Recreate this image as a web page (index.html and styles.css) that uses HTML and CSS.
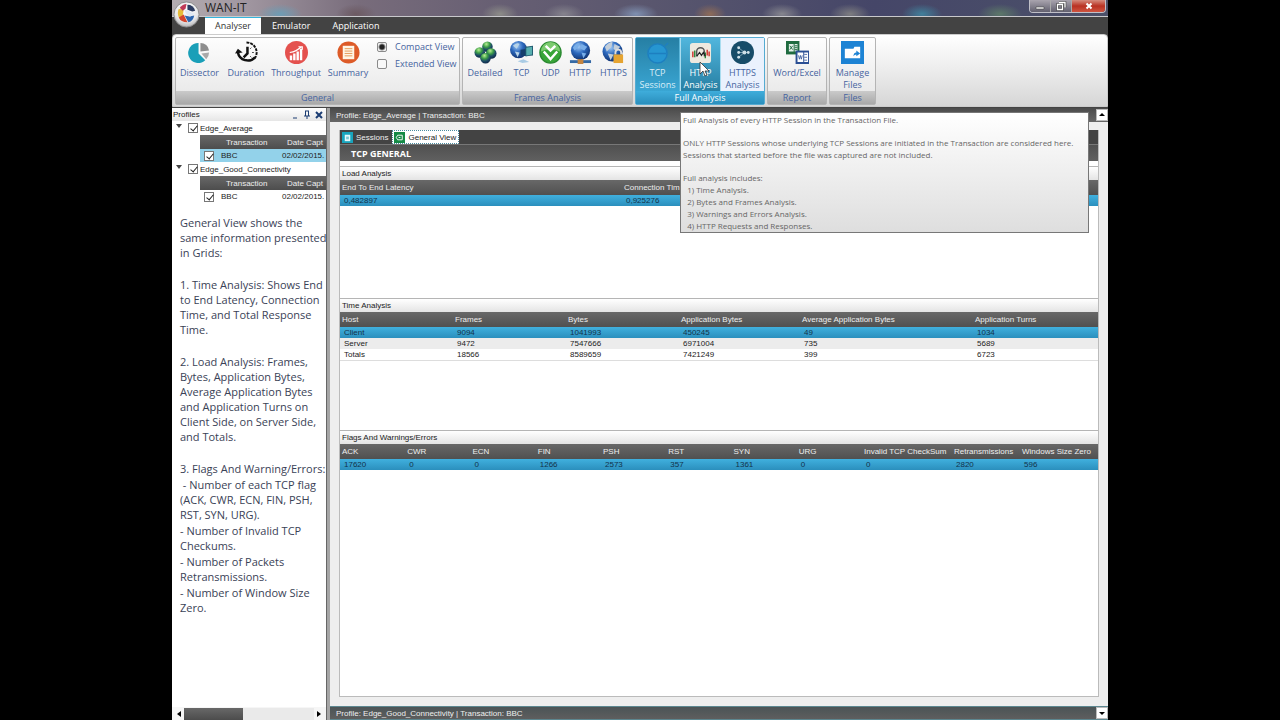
FILE: index.html
```
<!DOCTYPE html>
<html lang="en">
<head>
  <meta charset="utf-8">
  <title>WAN-IT</title>
  <link rel="stylesheet" href="styles.css">
</head>
<body>
  <div class="window">
    <header class="titlebar">
      <svg class="logo" viewBox="0 0 28 28">
        <defs>
          <radialGradient id="orb" cx=".5" cy=".3" r=".8">
            <stop offset="0" stop-color="#fff"/>
            <stop offset=".6" stop-color="#e8e8ea"/>
            <stop offset="1" stop-color="#9a9a9c"/>
          </radialGradient>
        </defs>
        <circle cx="14" cy="14" r="13" fill="url(#orb)" stroke="#8b8b8d"/>
        <path d="M6 8l5 1-1 7-4 1q-2-5 0-9z" fill="#e6bb3a"/>
        <path d="M7 7q3-4 7-4l-1 5-3 2z" fill="#c03a58"/>
        <path d="M15 4q6 0 8 6l-3 1-5-2z" fill="#2c3c62"/>
        <path d="M6 17l5-3 4 8q-7 0-9-5z" fill="#d4452e"/>
        <path d="M12 15l5 1 5-1q-1 6-6 7z" fill="#2d66b0"/>
        <path d="M12 9q4 0 7 3l3 1-4 3q-5-1-6-7z" fill="#dfe8f4"/>
      </svg>
      <h1>WAN-IT</h1>
      <div class="win-buttons">
        <button aria-label="Minimize"><svg viewBox="0 0 12 10"><path d="M2 6h8v2H2z" fill="#fff" stroke="#444" stroke-width=".6"/></svg></button>
        <button aria-label="Restore"><svg viewBox="0 0 12 10"><path d="M4 1.500h6v5M2.500 3.500h5v5h-5z" fill="none" stroke="#444" stroke-width="2.600"/><path d="M4 1.500h6v5M2.500 3.500h5v5h-5z" fill="none" stroke="#fff" stroke-width="1.300"/></svg></button>
        <button class="close" aria-label="Close"><svg viewBox="0 0 12 10"><path d="M3.500 2.500l5 5m0-5l-5 5" stroke="#fff" stroke-width="2"/></svg></button>
      </div>
    </header>

    <nav class="tabs">
      <button class="active">Analyser</button>
      <button>Emulator</button>
      <button>Application</button>
    </nav>

    <div class="ribbon">
      <section class="group general">
        <div class="tools">
          <button>
            <svg viewBox="0 0 24 24"><path d="M11 2v11l7 7A10.500 10.500 0 1 1 11 2z" fill="#1a9fb8"/><path d="M13 2a9 9 0 0 1 9 8l-9 1z" fill="#8d8d8d"/><path d="M14 13l8-1q0 4-3 7z" fill="#a9a9a9"/></svg>
            Dissector
          </button>
          <button>
            <svg viewBox="0 0 24 24"><path d="M12 1.500a10.500 10.500 0 0 1 9 16" fill="none" stroke="#111" stroke-width="2" stroke-dasharray="3 1"/><path d="M21 17a10.500 10.500 0 0 1-18-5" fill="none" stroke="#111" stroke-width="2.600"/><path d="M0 13l3-5 5 4z" fill="#111"/><path d="M13 6v7l-4 4" fill="none" stroke="#111" stroke-width="2.600"/><path d="M18 12h1.500M12 19v1.500M17 7l-1 1m1 9l-1-1" stroke="#111"/></svg>
            Duration
          </button>
          <button>
            <svg viewBox="0 0 24 24"><circle cx="12" cy="12" r="12" fill="#e4514e"/><path d="M5 15h2.500v5H5zM8.500 13H11v7H8.500zM12 11h2.500v9H12zM15.500 8H18v12h-2.500z" fill="#fff"/><path d="M5 12q7-1 12-6m-3 0h4v3" fill="none" stroke="#fff" stroke-width="1.300"/></svg>
            Throughput
          </button>
          <button>
            <svg viewBox="0 0 24 24"><circle cx="12" cy="12" r="11.500" fill="#dd5b28"/><path d="M6 5h12v14H6z" fill="#fff6e6"/><path d="M8 8h8M8 10.500h8M8 13h8M8 15.500h8" stroke="#e49a58"/></svg>
            Summary
          </button>
          <div class="views">
            <label><input type="radio" name="view" checked> Compact View</label>
            <label><input type="radio" name="view"> Extended View</label>
          </div>
        </div>
        <h2>General</h2>
      </section>

      <section class="group frames">
        <div class="tools">
          <button>
            <svg viewBox="0 0 24 24">
              <defs>
                <radialGradient id="ball" cx=".4" cy=".25" r=".75"><stop offset="0" stop-color="#b6ee90"/><stop offset=".4" stop-color="#3a9a48"/><stop offset=".7" stop-color="#1c4a66"/><stop offset="1" stop-color="#0e2a48"/></radialGradient>
                <radialGradient id="earth" cx=".4" cy=".3" r=".7"><stop offset="0" stop-color="#9fc9f5"/><stop offset=".5" stop-color="#2c68bd"/><stop offset="1" stop-color="#123472"/></radialGradient>
              </defs>
              <circle cx="14" cy="6" r="5.500" fill="url(#ball)"/><circle cx="6" cy="12" r="5.500" fill="url(#ball)"/><circle cx="18" cy="13" r="5.500" fill="url(#ball)"/><circle cx="12" cy="18" r="5.500" fill="url(#ball)"/>
            </svg>
            Detailed
          </button>
          <button>
            <svg viewBox="0 0 24 24"><circle cx="9" cy="9" r="9" fill="url(#earth)"/><path d="M3 5q4-4 7-2l-3 5zM5 11l5 1-2 5z" fill="#b8d4e8"/><path d="M11 9l7-1v8l-7-1z" fill="#163f6d"/><path d="M16 6l8-1v10l-8 1z" fill="#225a70"/><path d="M17 7l6-1v8l-6 1z" fill="#58b0b0"/><path d="M8 21l6-2 6 3-7 1z" fill="#a9cbe4"/></svg>
            TCP
          </button>
          <button>
            <svg viewBox="0 0 24 24"><circle cx="12" cy="12" r="11" fill="#37a537" stroke="#2b8a32" stroke-width="1.500"/><path d="M2 11a10 10 0 0 1 20 0q-10-5-20 0z" fill="#7ccb6f"/><path d="M7 5l5 5 5-5M5 11l7 8 7-8" fill="none" stroke="#fff" stroke-width="2.600"/></svg>
            UDP
          </button>
          <button>
            <svg viewBox="0 0 24 24"><circle cx="12" cy="10" r="10" fill="url(#earth)"/><path d="M4 7q3-5 7-5l-1 4-4 4zM13 3l6 3-3 4-4-2zM13 12l5 1-3 5z" fill="#79aee8"/><path d="M1 20h22v3H1z" fill="#3569a5"/><path d="M9 19h6v5H9z" fill="#c58540"/></svg>
            HTTP
          </button>
          <button>
            <svg viewBox="0 0 24 24"><circle cx="11" cy="11" r="10.500" fill="url(#earth)"/><path d="M3 6q4-5 8-5l-1 5-5 5zM13 3l6 3-4 5-3-3zM6 13l6 1-3 6z" fill="#c3ced9"/><path d="M14 14v-2a3 3 0 0 1 6 0v2" fill="none" stroke="#ddd" stroke-width="2"/><path d="M12 14h10v9H12z" fill="#e5a432"/></svg>
            HTTPS
          </button>
        </div>
        <h2>Frames Analysis</h2>
      </section>

      <section class="group full">
        <div class="tools">
          <button class="pressed">
            <svg viewBox="0 0 24 24"><circle cx="12" cy="13" r="10" fill="#2696d1" stroke="#1d7fc0" stroke-width="1.500"/><path d="M3 13h18M20 5l3-3" stroke="#1d7fc0" stroke-width="1.500"/></svg>
            TCP<br>Sessions
          </button>
          <button class="hover">
            <svg viewBox="0 0 24 24"><rect x="1" y="2" width="22" height="21" rx="3" fill="#eee9df"/><path d="M4 11v6M19 9v6M21 11v5" stroke="#d0342c" stroke-width="1.500"/><path d="M6 10v7M17 12v6" stroke="#2c8a3c" stroke-width="1.500"/><path d="M8 16V11a4 4 0 0 1 8 0v5" fill="none" stroke="#555" stroke-width="1.500"/><path d="M8 16l3-4 2 3 2-3 2 4" fill="none" stroke="#222" stroke-width="1.200"/></svg>
            HTTP<br>Analysis
          </button>
          <button class="light">
            <svg viewBox="0 0 24 24"><circle cx="12" cy="12" r="12" fill="#174c69"/><path d="M8 7l6 5-6 5M8 12h10" fill="none" stroke="#7ea2b5"/><g fill="#cfe0e8"><circle cx="8" cy="7" r="1.500"/><circle cx="8" cy="12" r="1.500"/><circle cx="8" cy="17" r="1.500"/><circle cx="14" cy="12" r="2"/><circle cx="18" cy="12" r="1.500"/></g></svg>
            HTTPS<br>Analysis
          </button>
        </div>
        <h2>Full Analysis</h2>
      </section>

      <section class="group report">
        <div class="tools">
          <button>
            <svg viewBox="0 0 24 24"><path d="M0 0h14v14H0z" fill="#1f6b3f"/><path d="M3 3h5v8H3zM9 3h3v8H9z" fill="#e4efe8"/><path d="M4 5l3 4m0-4l-3 4M9 5h3M9 7h3M9 9h3" stroke="#1f6b3f"/><path d="M10 10h14v14H10z" fill="#2b4f94"/><path d="M12 12h6v10h-6zM19 12h4v10h-4z" fill="#fff"/><path d="M13 15l1 4 1-4 1 4 1-4M19 14h3M19 17h3M19 20h3" fill="none" stroke="#2b4f94" stroke-width=".8"/></svg>
            Word/Excel
          </button>
        </div>
        <h2>Report</h2>
      </section>

      <section class="group files">
        <div class="tools">
          <button>
            <svg viewBox="0 0 24 24"><path d="M0 0h24v24H0z" fill="#1d83d4"/><path d="M4 8h9l1-2h6v12H4z" fill="#fff"/><path d="M13 16q0-4 3-4v-2l4 3-4 3v-2q-2 0-3 2z" fill="#1d83d4"/></svg>
            Manage<br>Files
          </button>
        </div>
        <h2>Files</h2>
      </section>
    </div>

    <div class="workspace">
      <aside class="profiles">
        <div class="panel-head">
          <span>Profiles</span>
          <button aria-label="Hide"><svg viewBox="0 0 10 10"><path d="M3 8h4" stroke="#1c3d73"/></svg></button>
          <button aria-label="Pin"><svg viewBox="0 0 10 10"><path d="M3 1h4M3.500 1v5M6.500 1v5M2 6h6M5 6v3" stroke="#1c3d73"/></svg></button>
          <button aria-label="Close panel"><svg viewBox="0 0 10 10"><path d="M2 2l6 6m0-6l-6 6" stroke="#1c3d73" stroke-width="2"/></svg></button>
        </div>

        <div class="tree">
          <label class="node"><i></i><input type="checkbox" checked> Edge_Average</label>
          <table class="captures">
            <tr><th></th><th>Transaction</th><th>Date Capt</th></tr>
            <tr class="selected"><td><input type="checkbox" aria-label="BBC" checked></td><td>BBC</td><td>02/02/2015.</td></tr>
          </table>
          <label class="node"><i></i><input type="checkbox" checked> Edge_Good_Connectivity</label>
          <table class="captures">
            <tr><th></th><th>Transaction</th><th>Date Capt</th></tr>
            <tr><td><input type="checkbox" aria-label="BBC" checked></td><td>BBC</td><td>02/02/2015.</td></tr>
          </table>
        </div>

        <div class="notes">
          <p>General View shows the<br>same information presented<br>in Grids:</p>
          <p>1. Time Analysis: Shows End<br>to End Latency, Connection<br>Time, and Total Response<br>Time.</p>
          <p>2. Load Analysis: Frames,<br>Bytes, Application Bytes,<br>Average Application Bytes<br>and Application Turns on<br>Client Side, on Server Side,<br>and Totals.</p>
          <div class="flags-note">
            <span>3. Flags And Warning/Errors:</span>
            <span>&nbsp;- Number of each TCP flag<br>(ACK, CWR, ECN, FIN, PSH,<br>RST, SYN, URG).</span>
            <span>- Number of Invalid TCP<br>Checkums.</span>
            <span>- Number of Packets<br>Retransmissions.</span>
            <span>- Number of Window Size<br>Zero.</span>
          </div>
        </div>

        <div class="hscroll">
          <button aria-label="Scroll left"><svg viewBox="0 0 10 10"><path d="M7 2v6L3 5z"/></svg></button>
          <div class="track"><div class="thumb"></div></div>
          <button aria-label="Scroll right"><svg viewBox="0 0 10 10"><path d="M3 2v6l4-3z"/></svg></button>
        </div>
      </aside>

      <main class="detail">
        <div class="profile-bar">
          <span>Profile: Edge_Average | Transaction: BBC</span>
          <button aria-label="Scroll up"><svg viewBox="0 0 10 10"><path d="M2 6h6L5 3z"/></svg></button>
        </div>

        <div class="sheet">
          <nav class="subtabs">
            <button><svg viewBox="0 0 12 12"><path d="M0 0h12v12H0z" fill="#18a4bd"/><path d="M3 3h6v7H3z" fill="#e6f7fa"/><path d="M4.500 5h3v3h-3z" fill="#7cc9d6"/></svg>Sessions</button>
            <button class="active"><svg viewBox="0 0 12 12"><path d="M0 0h12v12H0z" fill="#158a45"/><path d="M4 3.500h5v5H4L2.500 6z" fill="none" stroke="#fff"/><path d="M5 6h2" stroke="#fff"/></svg>General View</button>
          </nav>
          <h2 class="sheet-title">TCP GENERAL</h2>

          <div class="grids">
            <section>
              <h3>Load Analysis</h3>
              <table class="grid load">
                <tr><th>End To End Latency</th><th>Connection Tim</th></tr>
                <tr class="selected"><td>0,482897</td><td>0,925276</td></tr>
              </table>
            </section>

            <section>
              <h3>Time Analysis</h3>
              <table class="grid time">
                <tr><th>Host</th><th>Frames</th><th>Bytes</th><th>Application Bytes</th><th>Average Application Bytes</th><th>Application Turns</th></tr>
                <tr class="selected"><td>Client</td><td>9094</td><td>1041993</td><td>450245</td><td>49</td><td>1034</td></tr>
                <tr class="alt"><td>Server</td><td>9472</td><td>7547666</td><td>6971004</td><td>735</td><td>5689</td></tr>
                <tr class="last"><td>Totals</td><td>18566</td><td>8589659</td><td>7421249</td><td>399</td><td>6723</td></tr>
              </table>
            </section>

            <section>
              <h3>Flags And Warnings/Errors</h3>
              <table class="grid flags">
                <tr><th>ACK</th><th>CWR</th><th>ECN</th><th>FIN</th><th>PSH</th><th>RST</th><th>SYN</th><th>URG</th><th class="wide">Invalid TCP CheckSum</th><th class="mid">Retransmissions</th><th class="end">Windows Size Zero</th></tr>
                <tr class="selected"><td>17620</td><td>0</td><td>0</td><td>1266</td><td>2573</td><td>357</td><td>1361</td><td>0</td><td>0</td><td>2820</td><td>596</td></tr>
              </table>
            </section>
          </div>
        </div>

        <div class="profile-bar bottom">
          <span>Profile: Edge_Good_Connectivity | Transaction: BBC</span>
          <button aria-label="Scroll down"><svg viewBox="0 0 10 10"><path d="M2 4h6L5 7z"/></svg></button>
        </div>
      </main>
    </div>

    <div class="tooltip" role="tooltip">
      <p>Full Analysis of every HTTP Session in the Transaction File.</p>
      <p>ONLY HTTP Sessions whose underlying TCP Sessions are initiated in the Transaction are considered here.<br>Sessions that started before the file was captured are not included.</p>
      <p>Full analysis includes:<br>&nbsp; 1) Time Analysis.<br>&nbsp; 2) Bytes and Frames Analysis.<br>&nbsp; 3) Warnings and Errors Analysis.<br>&nbsp; 4) HTTP Requests and Responses.</p>
    </div>
    <svg class="cursor" viewBox="0 0 10 16"><path d="M1 1v12l3-3 2 5 2-1-2-4h4z" fill="#fff" stroke="#333" stroke-width=".8"/></svg>
  </div>
</body>
</html>
```
FILE: styles.css
```
* {
  box-sizing: border-box;
}

body {
  margin: 0;
  padding: 0 172px;
  background: #000;
  font-family: "Liberation Sans", sans-serif;
  font-size: 8px;
  line-height: 11px;
  color: #222;
}

button {
  margin: 0;
  padding: 0;
  border: none;
  background: none;
  font: inherit;
  color: inherit;
}

h1, h2, h3, p {
  margin: 0;
  font-size: inherit;
  font-weight: normal;
}

svg {
  display: block;
}

.window {
  position: relative;
  display: flex;
  flex-direction: column;
  height: 100vh;
  overflow: hidden;
  background: #4a4a4a;
}

/* title bar */
.titlebar {
  display: flex;
  justify-content: space-between;
  height: 17px;
  padding: 0 2px 0 33px;
  border-bottom: 1px solid #c9c9cc;
  background:
    radial-gradient(ellipse 22px 10px at 108px 14px, #6d9cb4, transparent),
    radial-gradient(ellipse 20px 10px at 184px 14px, #6c5a62, transparent),
    radial-gradient(ellipse 18px 10px at 328px 14px, #8c8c88, transparent),
    radial-gradient(ellipse 20px 10px at 392px 14px, #85838d, transparent),
    radial-gradient(ellipse 22px 10px at 464px 14px, #7f90b0, transparent),
    radial-gradient(ellipse 16px 10px at 538px 14px, #8d6b58, transparent),
    radial-gradient(ellipse 20px 10px at 610px 14px, #86868e, transparent),
    radial-gradient(ellipse 20px 10px at 678px 14px, #7d7d80, transparent),
    radial-gradient(ellipse 20px 10px at 750px 14px, #41809b, transparent),
    radial-gradient(ellipse 22px 10px at 828px 14px, #5c7869, transparent),
    linear-gradient(90deg, #b3acb0, #a096a0 8%, #786c7b 20%, #675f73 35%, #56546d 55%, #454668 75%, #4b5069);
}

.titlebar h1 {
  font-family: "Open Sans", sans-serif;
  font-size: 12px;
  line-height: 16px;
  color: #222;
}

.logo {
  position: absolute;
  left: 1px;
  top: 1px;
  z-index: 2;
  width: 27px;
  height: 27px;
}

.win-buttons {
  display: flex;
  height: 13px;
  border: 1px solid #c0c0c8;
  border-top: none;
  border-radius: 0 0 4px 4px;
  overflow: hidden;
}

.win-buttons button {
  display: flex;
  align-items: center;
  justify-content: center;
  width: 21px;
  border-right: 1px solid #aaa;
  background: linear-gradient(#a9a4ae, #62606f);
}

.win-buttons .close {
  width: 33px;
  border: none;
  background: linear-gradient(#d58c7e, #b93223 50%, #cf5440);
}

.win-buttons svg {
  width: 12px;
  height: 10px;
}

/* ribbon */
.tabs {
  display: flex;
  height: 17px;
  padding-left: 33px;
  background: #434343;
  font-family: "Open Sans", sans-serif;
  font-size: 9px;
  line-height: 16px;
  color: #fff;
}

.tabs button {
  padding: 0 11px;
}

.tabs .active {
  padding: 0 10px;
  border-top: 1px solid #35b5dd;
  background: #fff;
  color: #333;
}

.ribbon {
  display: flex;
  gap: 2px;
  height: 73px;
  padding: 2px 3px 0 2px;
  border: 1px solid #ccc;
  border-radius: 4px 4px 0 0;
  background: linear-gradient(#fff, #ececec 50%, #d6d6d6);
  font-family: "Open Sans", sans-serif;
  font-size: 9px;
  line-height: 12px;
  color: #4664a0;
}

.group {
  display: flex;
  flex-direction: column;
  height: 68px;
  border: 1px solid #b4b4b4;
  border-radius: 2px;
  background: linear-gradient(#fdfdfd, #e6e6e6);
}

.group h2 {
  height: 13px;
  line-height: 13px;
  text-align: center;
  background: linear-gradient(#cacaca, #a9a9a9);
}

.tools {
  display: grid;
  flex: 1;
}

.tools button {
  display: flex;
  flex-direction: column;
  align-items: center;
  padding-top: 3px;
  line-height: 12px;
  text-align: center;
  white-space: nowrap;
}

.tools button svg {
  flex: none;
  width: 23px;
  height: 23px;
  margin-bottom: 3px;
}

.general .tools {
  grid-template-columns: 47px 46px 54px 50px 86px;
}

.frames .tools {
  grid-template-columns: 44px 29px 29px 30px 37px;
}

.full .tools {
  grid-template-columns: 44px 41px 43px;
}

.report .tools {
  grid-template-columns: 58px;
}

.files .tools {
  grid-template-columns: 45px;
}

.views {
  display: flex;
  flex-direction: column;
  gap: 5px;
  padding: 3px 0 0 4px;
}

.views label {
  display: flex;
  align-items: center;
  gap: 8px;
  white-space: nowrap;
}

.views input {
  appearance: none;
  width: 10px;
  height: 10px;
  margin: 0;
  border: 1px solid #8a8a8a;
  border-radius: 2px;
  background: #f8f8f8;
}

.views input:checked {
  background: radial-gradient(circle, #222 2px, #f4f4f4 4px);
}

.full {
  border-color: #55abd2;
}

.full h2 {
  background: linear-gradient(#3faddb, #2a8fbd);
  color: #fff;
}

.pressed {
  border-right: 1px solid #5bb6da;
  background: linear-gradient(#267fa4, #3aa6d3);
  color: #d9eef8;
}

.hover {
  border: 1px solid #a9dcef;
  border-width: 0 1px;
  background: linear-gradient(#51b6dd, #277fa3);
  color: #fff;
}

.light {
  background: #eaf1fd;
}

/* workspace */
.workspace {
  display: flex;
  flex: 1;
  min-height: 0;
  border-top: 1px solid #444;
}

.profiles {
  display: flex;
  flex-direction: column;
  flex: none;
  width: 155px;
  background: #fff;
  border-right: 1px solid #666;
}

.panel-head {
  display: flex;
  align-items: center;
  gap: 2px;
  height: 13px;
  padding: 0 2px 0 1px;
  background: linear-gradient(#fff, #e6e6e6);
}

.panel-head span {
  flex: 1;
}

.panel-head svg,
.hscroll svg,
.profile-bar svg {
  width: 10px;
  height: 10px;
}

.tree {
  overflow: hidden;
}

.node {
  display: flex;
  align-items: center;
  gap: 2px;
  height: 14px;
  padding-left: 4px;
}

.node i {
  margin: 0 4px 4px 0;
  border: 3px solid transparent;
  border-top: 4px solid #444;
  border-bottom: none;
}

.profiles input {
  appearance: none;
  display: block;
  width: 10px;
  height: 10px;
  margin: 0;
  border: 1px solid #777;
  background: #fff;
}

.profiles input:checked::before {
  content: "";
  display: block;
  width: 3px;
  height: 6px;
  margin-left: 3px;
  border: solid #222;
  border-width: 0 1px 1px 0;
  transform: rotate(40deg);
}

.captures {
  width: 126px;
  margin-left: 28px;
  table-layout: fixed;
  border-collapse: collapse;
  white-space: nowrap;
}

.captures th {
  height: 14px;
  padding: 0 0 0 9px;
  background: linear-gradient(#686868, #4d4d4d);
  font-weight: normal;
  text-align: left;
  color: #eee;
}

.captures td {
  height: 13px;
  padding: 0 0 0 4px;
}

.captures th:first-child {
  width: 17px;
  padding: 0;
}

.captures th:nth-child(2) {
  width: 61px;
}

.captures .selected {
  background: #93d2ea;
}

.notes {
  display: flex;
  flex-direction: column;
  gap: 17px;
  flex: 1;
  padding: 12px 0 0 8px;
  font-family: "Open Sans", sans-serif;
  font-size: 11px;
  line-height: 15px;
  color: #3a4256;
  white-space: nowrap;
}

.flags-note {
  display: flex;
  flex-direction: column;
  gap: 1px;
}

.hscroll {
  display: flex;
  align-items: center;
  height: 13px;
  padding: 0 2px;
  background: #f6f6f6;
}

.track {
  flex: 1;
  height: 12px;
  background: #eaeaea;
}

.thumb {
  width: 45%;
  height: 100%;
  background: linear-gradient(#686868, #4c4c4c);
}

.detail {
  display: flex;
  flex-direction: column;
  flex: 1;
  min-width: 0;
  border-left: 3px solid #a5a5a5;
  background: #eee;
}

.profile-bar {
  display: flex;
  align-items: center;
  justify-content: space-between;
  height: 14px;
  padding-left: 6px;
  background: linear-gradient(#4b4b4b, #666);
  color: #eee;
}

.profile-bar button {
  display: flex;
  align-items: center;
  justify-content: center;
  width: 12px;
  height: 12px;
  border: 1px solid #bbb;
  background: #fff;
}

.bottom {
  border: 1px solid #5c8790;
  border-width: 1px 0;
  background: linear-gradient(#4b5456, #5e5e5e);
}

.sheet {
  display: flex;
  flex-direction: column;
  flex: 1;
  margin: 8px 9px 9px;
  border: 1px solid #bbb;
  border-top: none;
  background: #fff;
}

.subtabs {
  display: flex;
  height: 14px;
  padding-left: 2px;
  background: #434343;
  color: #eee;
}

.subtabs button {
  display: flex;
  align-items: center;
  gap: 3px;
  padding-right: 4px;
}

.subtabs .active {
  padding: 0 2px 0 1px;
  border: 1px dotted #4b8ca0;
  background: #fff;
  color: #222;
}

.subtabs svg {
  width: 11px;
  height: 11px;
}

.sheet-title {
  height: 17px;
  margin-bottom: 5px;
  padding-left: 11px;
  border-top: 1px solid #777;
  background: linear-gradient(#505050, #606060);
  font-family: "Open Sans", sans-serif;
  font-size: 9px;
  font-weight: bold;
  line-height: 17px;
  color: #fff;
}

.grids {
  display: grid;
  grid-template-rows: 132px 132px 1fr;
  flex: 1;
}

.grids h3 {
  height: 14px;
  padding-left: 2px;
  border-top: 1px solid #b5b5b5;
  background: linear-gradient(#fff, #e4e4e4);
  line-height: 13px;
}

.grid {
  width: 100%;
  table-layout: fixed;
  border-collapse: collapse;
  white-space: nowrap;
}

.grid th {
  height: 15px;
  padding: 0 0 0 2px;
  background: linear-gradient(#686868, #505050);
  font-weight: normal;
  text-align: left;
  color: #eee;
}

.grid td {
  height: 11px;
  padding: 0 0 0 4px;
}

.grid .selected {
  background: linear-gradient(#40b0de, #2b8fbd);
  color: #13324a;
}

.grid .alt {
  background: #ececec;
}

.grid .last td {
  border-bottom: 1px solid #ddd;
}

.load th:first-child {
  width: 282px;
}

.time th {
  width: 113px;
}

.time th:nth-child(4) {
  width: 121px;
}

.time th:nth-child(5) {
  width: 173px;
}

.time th:last-child {
  width: auto;
}

.flags .wide {
  width: 90px;
}

.flags .mid {
  width: 68px;
}

.flags .end {
  width: 78px;
}

/* overlays */
.tooltip {
  position: absolute;
  left: 508px;
  top: 112px;
  display: flex;
  flex-direction: column;
  gap: 11px;
  min-width: 409px;
  padding: 1px 4px 0 2px;
  border: 1px solid #777;
  background: linear-gradient(#fff, #dedede);
  font-family: "Open Sans", sans-serif;
  font-size: 8px;
  line-height: 12px;
  color: #666;
  white-space: nowrap;
}

.cursor {
  position: absolute;
  left: 527px;
  top: 61px;
  width: 10px;
  height: 16px;
}
```
